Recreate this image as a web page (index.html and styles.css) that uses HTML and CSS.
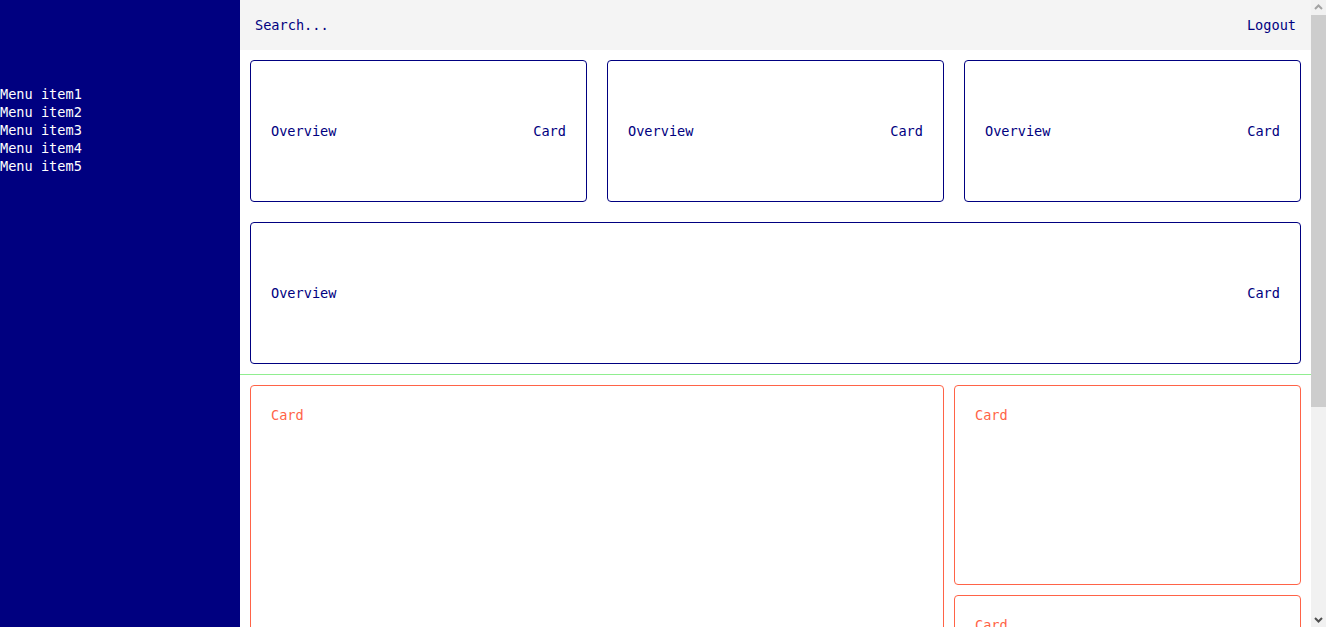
FILE: index.html
```html
<!DOCTYPE html>
<html>
<head>
<meta charset="utf-8">
<link rel="stylesheet" href="styles.css">
</head>
<body>
<div class="layout">
  <aside class="sidebar">
    <div class="menu">
      <div class="menu-item">Menu item1</div>
      <div class="menu-item">Menu item2</div>
      <div class="menu-item">Menu item3</div>
      <div class="menu-item">Menu item4</div>
      <div class="menu-item">Menu item5</div>
    </div>
  </aside>
  <main class="main">
    <header class="header">
      <span>Search...</span>
      <span>Logout</span>
    </header>
    <section class="overview">
      <div class="card-blue"><span>Overview</span><span>Card</span></div>
      <div class="card-blue"><span>Overview</span><span>Card</span></div>
      <div class="card-blue"><span>Overview</span><span>Card</span></div>
      <div class="card-blue wide"><span>Overview</span><span>Card</span></div>
    </section>
    <section class="details">
      <div class="card-red big">Card</div>
      <div class="side-col">
        <div class="card-red small">Card</div>
        <div class="card-red small">Card</div>
      </div>
    </section>
  </main>
  <div class="scrollbar">
    <div class="sb-btn">
      <svg width="15" height="15" viewBox="0 0 15 15"><path d="M4 9 L7.5 5.5 L11 9" fill="none" stroke="#a3a3a3" stroke-width="2"/></svg>
    </div>
    <div class="sb-thumb"></div>
    <div class="sb-track"></div>
    <div class="sb-btn">
      <svg width="15" height="15" viewBox="0 0 15 15"><path d="M4 6 L7.5 9.5 L11 6" fill="none" stroke="#505050" stroke-width="2"/></svg>
    </div>
  </div>
</div>
</body>
</html>
```
FILE: styles.css
```css
html, body {
  margin: 0;
  padding: 0;
}
body {
  font-family: "DejaVu Sans Mono", "Liberation Mono", monospace;
  font-size: 13.6px;
  line-height: 18px;
  background: #fff;
}
.layout {
  display: flex;
  height: 100vh;
  overflow: hidden;
}
.sidebar {
  width: 240px;
  flex: 0 0 240px;
  background: #000080;
  color: #fff;
}
.menu {
  padding-top: 85px;
}
.main {
  flex: 1;
  min-width: 0;
  overflow: hidden;
}
.scrollbar {
  flex: 0 0 15px;
  width: 15px;
  background: #f1f1f1;
  display: flex;
  flex-direction: column;
}
.sb-btn {
  height: 15px;
  flex: 0 0 15px;
}
.sb-btn svg {
  display: block;
}
.sb-thumb {
  height: 392px;
  flex: 0 0 392px;
  background: #cdcdcd;
}
.sb-track {
  flex: 1;
}
.header {
  height: 50px;
  background: #f4f4f4;
  color: #000080;
  display: flex;
  align-items: center;
  justify-content: space-between;
  padding: 0 15px;
}
.overview {
  padding: 10px;
  display: grid;
  grid-template-columns: 1fr 1fr 1fr;
  gap: 20px;
}
.card-blue {
  height: 142px;
  box-sizing: border-box;
  border: 1px solid #000080;
  border-radius: 4px;
  color: #000080;
  display: flex;
  align-items: center;
  justify-content: space-between;
  padding: 0 20px;
}
.card-blue.wide {
  grid-column: 1 / 4;
}
.details {
  border-top: 1px solid #90ee90;
  padding: 10px;
  display: grid;
  grid-template-columns: 2fr 1fr;
  gap: 10px;
  align-items: start;
}
.card-red {
  box-sizing: border-box;
  border: 1px solid #ff6347;
  border-radius: 4px;
  color: #ff6347;
  padding: 20px;
}
.card-red.big {
  height: 560px;
}
.card-red.small {
  height: 200px;
}
.side-col {
  display: flex;
  flex-direction: column;
  gap: 10px;
}
```
